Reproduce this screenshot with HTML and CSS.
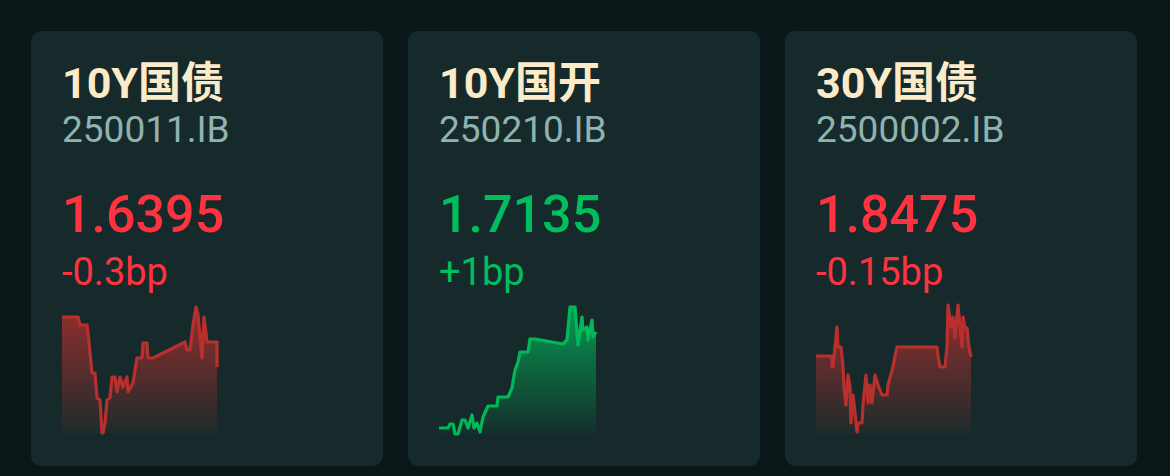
FILE: index.html
```html
<!DOCTYPE html>
<html lang="zh-CN">
    <head>
        <meta charset="UTF-8" />
        <meta name="viewport" content="width=device-width, initial-scale=1.0" />
        <title>国债行情</title>
        <link rel="stylesheet" href="styles.css">
    </head>
    <body>
        <div class="board">
            <!-- 10Y 国债 -->
            <div class="card">
                <div class="name">10Y国债</div>
                <div class="code">250011.IB</div>
                <div class="price down">1.6395</div>
                <div class="change down">-0.3bp</div>
                <svg class="spark" viewBox="0 0 157 129" width="157" height="129">
                    <defs>
                        <linearGradient id="fillRed1" x1="0" y1="0" x2="0" y2="129" gradientUnits="userSpaceOnUse">
                            <stop offset="0" stop-color="#c0302e" stop-opacity="0.75" />
                            <stop offset="1" stop-color="#c0302e" stop-opacity="0.05" />
                        </linearGradient>
                    </defs>
                    <polygon fill="url(#fillRed1)" points="0,12 16,12 18,20 25,20 26,28 30,68 33,68 35,93 38,95 40,128 41,128 43,118 45,95 48,93 50,72 53,72 55,87 58,72 61,82 65,72 66,87 71,78 75,53 80,53 81,38 85,38 86,53 91,53 123,37 125,45 128,45 131,20 134,2 136,10 140,53 142,12 145,37 155,37 155,62 155,129 0,129" />
                    <polyline class="line red" points="0,12 16,12 18,20 25,20 26,28 30,68 33,68 35,93 38,95 40,128 41,128 43,118 45,95 48,93 50,72 53,72 55,87 58,72 61,82 65,72 66,87 71,78 75,53 80,53 81,38 85,38 86,53 91,53 123,37 125,45 128,45 131,20 134,2 136,10 140,53 142,12 145,37 155,37 155,62" />
                </svg>
            </div>

            <!-- 10Y 国开 -->
            <div class="card">
                <div class="name">10Y国开</div>
                <div class="code">250210.IB</div>
                <div class="price up">1.7135</div>
                <div class="change up">+1bp</div>
                <svg class="spark" viewBox="0 0 157 129" width="157" height="129">
                    <defs>
                        <linearGradient id="fillGreen" x1="0" y1="0" x2="0" y2="129" gradientUnits="userSpaceOnUse">
                            <stop offset="0" stop-color="#00b85a" stop-opacity="0.8" />
                            <stop offset="1" stop-color="#00b85a" stop-opacity="0.03" />
                        </linearGradient>
                    </defs>
                    <polygon fill="url(#fillGreen)" points="0,123 9,123 11,119 14,119 16,129 19,129 23,115 26,115 29,123 33,110 35,123 38,118 41,127 44,112 49,101 58,101 59,92 69,92 73,83 76,65 79,57 81,47 89,47 91,34 96,34 124,39 128,35 131,2 136,2 139,40 143,12 144,25 148,22 149,35 153,15 154,32 157,27 157,129 0,129" />
                    <polyline class="line green" points="0,123 9,123 11,119 14,119 16,129 19,129 23,115 26,115 29,123 33,110 35,123 38,118 41,127 44,112 49,101 58,101 59,92 69,92 73,83 76,65 79,57 81,47 89,47 91,34 96,34 124,39 128,35 131,2 136,2 139,40 143,12 144,25 148,22 149,35 153,15 154,32 157,27" />
                </svg>
            </div>

            <!-- 30Y 国债 -->
            <div class="card">
                <div class="name">30Y国债</div>
                <div class="code">2500002.IB</div>
                <div class="price down">1.8475</div>
                <div class="change down">-0.15bp</div>
                <svg class="spark" viewBox="0 0 157 129" width="157" height="129">
                    <defs>
                        <linearGradient id="fillRed3" x1="0" y1="0" x2="0" y2="129" gradientUnits="userSpaceOnUse">
                            <stop offset="0" stop-color="#c0302e" stop-opacity="0.75" />
                            <stop offset="1" stop-color="#c0302e" stop-opacity="0.05" />
                        </linearGradient>
                    </defs>
                    <polygon fill="url(#fillRed3)" points="0,51 16,51 16,62 17,62 19,42 21,22 22,42 25,42 27,62 28,82 30,100 32,70 34,82 35,118 37,90 39,108 41,127 42,118 46,118 47,100 50,70 52,98 54,80 56,98 59,70 62,80 66,90 71,90 72,80 77,62 79,51 81,42 121,42 122,51 124,62 129,62 131,42 132,0 135,22 137,12 139,33 142,0 146,42 147,12 149,23 151,23 153,42 155,52 155,129 0,129" />
                    <polyline class="line red" points="0,51 16,51 16,62 17,62 19,42 21,22 22,42 25,42 27,62 28,82 30,100 32,70 34,82 35,118 37,90 39,108 41,127 42,118 46,118 47,100 50,70 52,98 54,80 56,98 59,70 62,80 66,90 71,90 72,80 77,62 79,51 81,42 121,42 122,51 124,62 129,62 131,42 132,0 135,22 137,12 139,33 142,0 146,42 147,12 149,23 151,23 153,42 155,52" />
                </svg>
            </div>
        </div>
    </body>
</html>
```

FILE: styles.css
```css
html,
body {
    margin: 0;
    background-color: #0a1718;
}

body {
    padding: 31px 33px 0 31px;
    font-family: Roboto, "Noto Sans CJK SC", sans-serif;
}

.board {
    display: grid;
    grid-template-columns: repeat(3, 352px);
    gap: 25px;
}

.card {
    height: 435px;
    box-sizing: border-box;
    padding: 29px 31px 0 31px;
    background-color: #162a2b;
    border-radius: 10px;
}

.name {
    font-size: 43px;
    line-height: 47px;
    font-weight: 700;
    color: #fcebc9;
}

.code {
    font-size: 37px;
    line-height: 45px;
    color: #8fb3ae;
}

.price {
    margin-top: 34px;
    font-size: 52px;
    line-height: 58px;
    font-weight: 500;
}

.change {
    margin-top: 6px;
    font-size: 38px;
    line-height: 44px;
}

.down {
    color: #ff3340;
}

.up {
    color: #00bd5e;
}

.spark {
    display: block;
    margin-top: 11px;
    overflow: visible;
}

.line {
    fill: none;
    stroke-width: 3.2;
    stroke-linejoin: round;
}

.line.red {
    stroke: #b8302e;
}

.line.green {
    stroke: #00b85a;
}
```
